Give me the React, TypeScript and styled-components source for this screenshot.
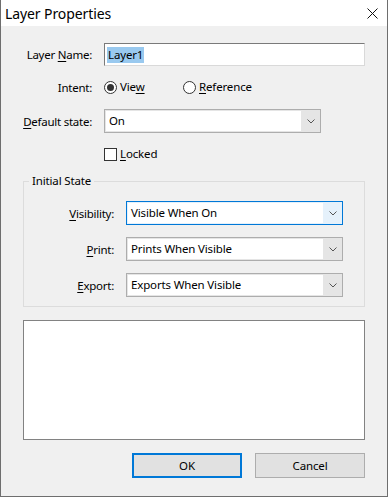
import React from "react";
import styled, { createGlobalStyle } from "styled-components";

const Global = createGlobalStyle`
  html, body { margin: 0; padding: 0; background: #ffffff; }
  body {
    font-family: "Noto Sans", "Open Sans", sans-serif;
    font-size: 11.5px;
    letter-spacing: -0.15px;
    color: #000;
  }
  * { box-sizing: border-box; }
`;

const Window = styled.div`
  width: 388px;
  height: 497px;
  border: 1px solid #6e6e6e;
  border-top: none;
  background: #f0f0f0;
  display: flex;
  flex-direction: column;
`;

const TitleBar = styled.div`
  height: 26px;
  flex: none;
  background: #fff;
  display: flex;
  align-items: center;
  justify-content: space-between;
  padding: 0 9px 0 4px;
`;

const Title = styled.div`
  font-size: 14px;
  letter-spacing: -0.1px;
  line-height: 18px;
  padding-top: 1px;
`;

const Body = styled.div`
  flex: 1;
  display: flex;
  flex-direction: column;
  padding: 17px 22px 0 22px;
`;

const Row = styled.div<{ $mt?: number; $h: number; $label: number }>`
  display: grid;
  grid-template-columns: ${(p) => p.$label}px 1fr;
  column-gap: 12px;
  align-items: center;
  height: ${(p) => p.$h}px;
  margin-top: ${(p) => p.$mt ?? 0}px;
`;

const Label = styled.div`
  display: flex;
  justify-content: flex-end;
  white-space: nowrap;
  line-height: 16px;
  padding-top: 1px;
  letter-spacing: -0.25px;
  & > span { flex: none; }
`;

const Key = styled.span`
  text-decoration: underline;
  text-underline-offset: 2px;
  text-decoration-thickness: 1px;
`;

const TextBox = styled.div`
  height: 23px;
  background: #fff;
  border: 1px solid;
  border-color: #7a7a7a #d9d9d9 #d9d9d9 #7a7a7a;
  display: flex;
  align-items: center;
  padding-left: 2px;
`;

const Selected = styled.span`
  background: #99c9ef;
  line-height: 16px;
  padding: 0 1px;
`;

const RadioGroup = styled.div`
  display: grid;
  grid-template-columns: 79px auto;
  align-items: center;
`;

const Option = styled.div`
  display: flex;
  align-items: center;
  gap: 3px;
  line-height: 16px;
`;

const RadioCircle = styled.span<{ $on?: boolean }>`
  width: 13px;
  height: 13px;
  border-radius: 50%;
  border: 1px solid #333;
  background: #fff;
  display: flex;
  align-items: center;
  justify-content: center;
  &::after {
    content: "";
    width: 7px;
    height: 7px;
    border-radius: 50%;
    background: ${(p) => (p.$on ? "#333" : "transparent")};
  }
`;

const CheckBox = styled.span`
  width: 13px;
  height: 13px;
  border: 1px solid #333;
  background: #fff;
  flex: none;
`;

const Combo = styled.div<{ $focus?: boolean }>`
  width: 217px;
  height: 24px;
  border: 1px solid ${(p) => (p.$focus ? "#0078d7" : "#adadad")};
  background: ${(p) => (p.$focus ? "#e5f1fb" : "#e5e5e5")};
  display: grid;
  grid-template-columns: 1fr 19px;
  padding: 1px 0 1px 1px;
`;

const ComboField = styled.div`
  background: #fff;
  display: flex;
  align-items: center;
  padding-left: 3px;
  line-height: 16px;
`;

const ComboButton = styled.div`
  display: flex;
  align-items: center;
  justify-content: center;
`;

const Group = styled.fieldset`
  margin: 13px 0 0 0;
  padding: 12px 20px 9px 0;
  border: 1px solid #dcdcdc;
  min-width: 0;
  display: flex;
  flex-direction: column;
  gap: 12px;
`;

const Legend = styled.legend`
  margin-left: 5px;
  padding: 0 3px;
  line-height: 16px;
`;

const ListBox = styled.div`
  margin-top: 13px;
  height: 120px;
  background: #fff;
  border: 1px solid #828282;
`;

const Buttons = styled.div`
  margin-top: 13px;
  display: flex;
  justify-content: flex-end;
  gap: 13px;
`;

const Button = styled.button<{ $default?: boolean }>`
  width: 110px;
  height: 25px;
  font: inherit;
  letter-spacing: inherit;
  color: #000;
  background: #e1e1e1;
  border: ${(p) => (p.$default ? "2px solid #0078d7" : "1px solid #adadad")};
  padding: 0;
`;

const Chevron = () => (
  <svg width="8" height="5" viewBox="0 0 8 5">
    <polyline points="0.5,0.5 4,4 7.5,0.5" fill="none" stroke="#555" strokeWidth="1" />
  </svg>
);

const CloseIcon = () => (
  <svg width="11" height="11" viewBox="0 0 11 11">
    <path d="M0.5 0.5 L10.5 10.5 M10.5 0.5 L0.5 10.5" stroke="#111" strokeWidth="1" />
  </svg>
);

const ComboBox: React.FC<{ value: string; focus?: boolean }> = ({ value, focus }) => (
  <Combo $focus={focus}>
    <ComboField>{value}</ComboField>
    <ComboButton>
      <Chevron />
    </ComboButton>
  </Combo>
);

export default function App() {
  return (
    <>
      <Global />
      <Window>
        <TitleBar>
          <Title>Layer Properties</Title>
          <CloseIcon />
        </TitleBar>
        <Body>
          <Row $h={23} $label={69}>
            <Label>
              <span>
                Layer <Key>N</Key>ame:
              </span>
            </Label>
            <TextBox>
              <Selected>Layer1</Selected>
            </TextBox>
          </Row>
          <Row $h={18} $mt={12} $label={69}>
            <Label>
              <span>Intent:</span>
            </Label>
            <RadioGroup>
              <Option>
                <RadioCircle $on />
                <span>
                  Vie<Key>w</Key>
                </span>
              </Option>
              <Option>
                <RadioCircle />
                <span>
                  <Key>R</Key>eference
                </span>
              </Option>
            </RadioGroup>
          </Row>
          <Row $h={24} $mt={13} $label={69}>
            <Label>
              <span>
                <Key>D</Key>efault state:
              </span>
            </Label>
            <ComboBox value="On" />
          </Row>
          <Row $h={14} $mt={13} $label={69}>
            <span />
            <Option>
              <CheckBox />
              <span>
                <Key>L</Key>ocked
              </span>
            </Option>
          </Row>
          <Group>
            <Legend>Initial State</Legend>
            <Row $h={24} $label={90}>
              <Label>
                <span>
                  <Key>V</Key>isibility:
                </span>
              </Label>
              <ComboBox value="Visible When On" focus />
            </Row>
            <Row $h={24} $label={90}>
              <Label>
                <span>
                  <Key>P</Key>rint:
                </span>
              </Label>
              <ComboBox value="Prints When Visible" />
            </Row>
            <Row $h={24} $label={90}>
              <Label>
                <span>
                  <Key>E</Key>xport:
                </span>
              </Label>
              <ComboBox value="Exports When Visible" />
            </Row>
          </Group>
          <ListBox />
          <Buttons>
            <Button $default>OK</Button>
            <Button>Cancel</Button>
          </Buttons>
        </Body>
      </Window>
    </>
  );
}
